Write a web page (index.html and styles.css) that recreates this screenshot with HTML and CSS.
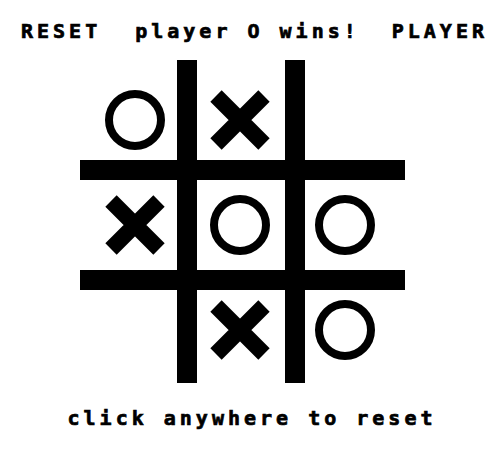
FILE: index.html
```html
<!DOCTYPE html>
<html>
<head>
<meta charset="utf-8">
<link rel="stylesheet" href="styles.css">
</head>
<body>
<div class="screen">
  <header class="status">
    <span class="btn">RESET</span>
    <span class="msg">player O wins!</span>
    <span class="btn">PLAYER</span>
  </header>
  <svg class="board" width="325" height="323" viewBox="0 0 325 323">
    <g class="lines">
      <rect x="97" y="0" width="20" height="323"/>
      <rect x="205" y="0" width="20" height="323"/>
      <rect x="0" y="100" width="325" height="20"/>
      <rect x="0" y="210" width="325" height="20"/>
    </g>
    <g class="o">
      <circle cx="55" cy="60" r="26"/>
      <circle cx="160" cy="165" r="26"/>
      <circle cx="265" cy="165" r="26"/>
      <circle cx="265" cy="270" r="26"/>
    </g>
    <g class="x">
      <path d="M136 36 L184 84 M184 36 L136 84"/>
      <path d="M31 141 L79 189 M79 141 L31 189"/>
      <path d="M136 246 L184 294 M184 246 L136 294"/>
    </g>
  </svg>
  <footer class="hint">click anywhere to reset</footer>
</div>
</body>
</html>
```
FILE: styles.css
```css
html, body {
  margin: 0;
  padding: 0;
  background: #fff;
}
.screen {
  width: 500px;
  height: 450px;
  display: flex;
  flex-direction: column;
  font-family: "DejaVu Sans Mono", "Liberation Mono", monospace;
  font-weight: bold;
  font-size: 20px;
  line-height: 24px;
  letter-spacing: 4px;
  color: #000;
  -webkit-text-stroke: 0.7px #000;
}
.status {
  display: flex;
  justify-content: space-between;
  padding: 19px 12px 0 21px;
  height: 24px;
}
.msg {
  margin-left: 2px;
}
.board {
  display: block;
  margin: 17px 0 0 80px;
}
.lines rect {
  fill: #000;
}
.o circle {
  fill: none;
  stroke: #000;
  stroke-width: 8;
}
.x path {
  fill: none;
  stroke: #000;
  stroke-width: 16;
  stroke-linecap: butt;
}
.hint {
  margin-top: 23px;
  text-align: center;
  padding-left: 4px;
}
```
